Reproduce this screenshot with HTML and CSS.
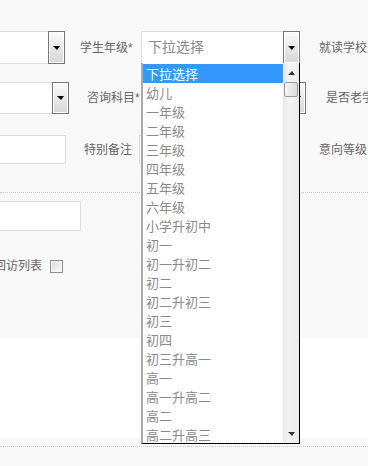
FILE: index.html
```html
<!DOCTYPE html>
<html lang="zh-CN">
<head>
    <meta charset="UTF-8">
    <meta name="viewport" content="width=device-width, initial-scale=1.0">
    <title>学员登记</title>
    <link rel="stylesheet" href="styles.css">
</head>
<body>
    <div class="panel">
        <div class="form">
            <div class="row row1">
                <div class="sel w-l1"><span class="sel-text"></span><span class="sel-btn"><i class="arrow"></i></span></div>
                <label class="lbl lb1">学生年级*</label>
                <div class="sel w-mid open">
                    <span class="sel-text">下拉选择</span><span class="sel-btn"><i class="arrow"></i></span>
                    <div class="list">
                        <ul class="items">
                            <li class="on">下拉选择</li>
                            <li>幼儿</li>
                            <li>一年级</li>
                            <li>二年级</li>
                            <li>三年级</li>
                            <li>四年级</li>
                            <li>五年级</li>
                            <li>六年级</li>
                            <li>小学升初中</li>
                            <li>初一</li>
                            <li>初一升初二</li>
                            <li>初二</li>
                            <li>初二升初三</li>
                            <li>初三</li>
                            <li>初四</li>
                            <li>初三升高一</li>
                            <li>高一</li>
                            <li>高一升高二</li>
                            <li>高二</li>
                            <li>高二升高三</li>
                        </ul>
                        <div class="scroll">
                            <span class="sb-btn"><i class="tri-up"></i></span>
                            <span class="thumb"></span>
                            <span class="sb-track"></span>
                            <span class="sb-btn"><i class="tri-down"></i></span>
                        </div>
                    </div>
                </div>
                <label class="lbl lb-r1">就读学校</label>
            </div>
            <div class="row row2">
                <div class="sel w-l2"><span class="sel-text"></span><span class="sel-btn"><i class="arrow"></i></span></div>
                <label class="lbl lb2">咨询科目*</label>
                <div class="sel w-mid2"><span class="sel-text"></span><span class="sel-btn"><i class="arrow"></i></span></div>
                <label class="lbl lb-r2">是否老学员</label>
            </div>
            <div class="row row3">
                <input class="txt w-l3" type="text">
                <label class="lbl lb3">特别备注</label>
                <input class="txt w-mid3" type="text">
                <label class="lbl lb-r3">意向等级</label>
            </div>
            <div class="divider"></div>
            <input class="txt w-l4" type="text">
            <div class="check-row">
                <label class="lbl lb4">加入回访列表</label>
                <span class="checkbox"></span>
            </div>
        </div>
    </div>
    <div class="band"></div>
    <div class="foot"></div>
</body>
</html>
```

FILE: styles.css
```css
body {
    margin: 0;
    background-color: #f8f8f8;
    font-family: "Liberation Sans", "Noto Sans CJK SC", sans-serif;
    overflow: hidden;
    height: 466px;
}
.panel {
    padding: 31px 0 59px;
}
.form {
    margin-left: -60px;
}
.row {
    display: flex;
    align-items: center;
    white-space: nowrap;
}
.row > * {
    flex-shrink: 0;
}
.row1 {
    height: 33px;
    margin-bottom: 18px;
}
.row2 {
    height: 32px;
    margin-bottom: 21px;
}
.row3 {
    height: 29px;
}
.lbl {
    font-size: 12px;
    color: #666;
    line-height: 16px;
}
.lb1 { margin-left: 15px; width: 61px; }
.lb2 { margin-left: 18px; width: 59px; }
.lb3 { margin-left: 18px; width: 55px; }
.lb-r1 { margin-left: 19px; }
.lb-r2 { margin-left: 20px; }
.lb-r3 { margin-left: 20px; }

/* select boxes */
.sel {
    position: relative;
    display: flex;
    height: 100%;
    box-sizing: border-box;
    border: 1px solid #dcdcdc;
    background-color: #fff;
}
.sel-text {
    flex: 1;
    padding-left: 6px;
    font-size: 14px;
    line-height: 31px;
    color: #8a8a8a;
}
.sel-btn {
    width: 15px;
    margin: -1px -1px -1px 0;
    border: 1px solid #777;
    background: linear-gradient(#fbfbfb, #d6d6d6);
    box-shadow: inset 0 0 0 1px #fff;
    display: flex;
    align-items: center;
    justify-content: center;
}
.arrow {
    width: 0;
    height: 0;
    border-left: 4px solid transparent;
    border-right: 3px solid transparent;
    border-top: 4px solid #000;
}
.w-l1 { width: 125px; }
.w-l2 { width: 129px; }
.w-mid { width: 159px; }
.w-mid2 { width: 160px; }

/* text inputs */
.txt {
    display: block;
    box-sizing: border-box;
    height: 100%;
    border: 1px solid #dcdcdc;
    background-color: #fff;
    padding: 0;
    margin: 0;
}
.w-l3 { width: 126px; }
.w-mid3 { width: 160px; }
.w-l4 {
    width: 141px;
    height: 30px;
    margin-top: 8px;
}
.divider {
    margin-top: 28px;
    margin-left: 60px;
    border-top: 1px dotted #c8c8c8;
}
.check-row {
    display: flex;
    align-items: center;
    height: 26px;
    margin-top: 22px;
}
.lb4 {
    width: 102px;
    text-align: right;
}
.checkbox {
    width: 11px;
    height: 11px;
    margin-left: 8px;
    border: 1px solid #8e8e8e;
    background: linear-gradient(135deg, #dcdcdc, #fafafa);
    box-shadow: inset 0 0 0 1px #f4f4f4;
}

/* open dropdown list */
.list {
    position: absolute;
    left: -1px;
    top: 100%;
    z-index: 5;
    width: 159px;
    height: 381px;
    box-sizing: border-box;
    display: flex;
    background-color: #fff;
    border-left: 2px solid #a9a9a9;
    border-right: 1px solid #000;
    border-bottom: 1px solid #000;
}
.items {
    flex: 1;
    margin: 0;
    padding: 1px 0 0;
    list-style: none;
    overflow: hidden;
}
.items li {
    height: 19px;
    line-height: 21px;
    padding-left: 3px;
    font-size: 13px;
    color: #8a8a8a;
}
.items li.on {
    background-color: #3399ff;
    color: #fff;
}
.scroll {
    width: 16px;
    display: flex;
    flex-direction: column;
    background: linear-gradient(90deg, #e8e8e8, #f4f4f4 40%, #ebebeb);
}
.sb-btn {
    height: 19px;
    display: flex;
    align-items: center;
    justify-content: center;
}
.sb-track {
    flex: 1;
}
.thumb {
    height: 15px;
    margin: 0 1px;
    border: 1px solid #9a9a9a;
    border-radius: 2px;
    box-sizing: border-box;
    background: linear-gradient(90deg, #f6f6f6, #dadada);
}
.tri-up {
    border-left: 4px solid transparent;
    border-right: 3px solid transparent;
    border-bottom: 4px solid #333;
}
.tri-down {
    border-left: 4px solid transparent;
    border-right: 3px solid transparent;
    border-top: 4px solid #333;
}

.band {
    height: 100px;
    background-color: #fff;
}
.foot {
    margin-top: 8px;
    border-top: 1px dotted #c8c8c8;
}
```
